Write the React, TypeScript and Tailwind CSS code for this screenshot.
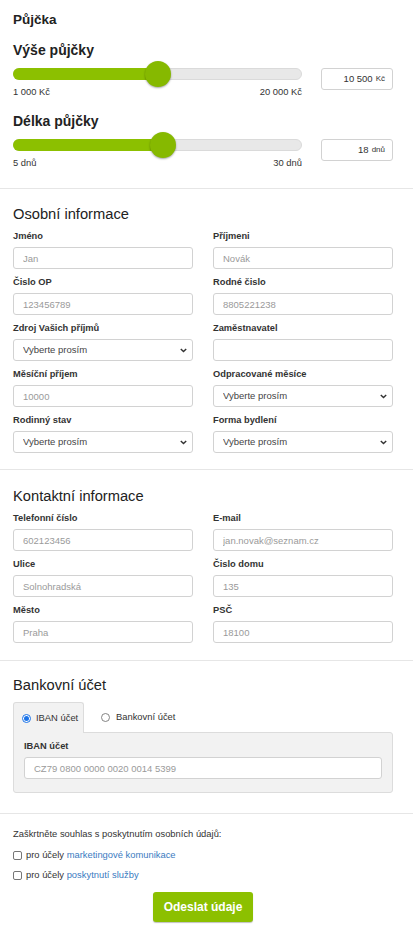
import React from "react";

function Label({ children }: { children: React.ReactNode }) {
  return (
    <div className="h-[15px] text-[9.3px] font-bold leading-[15px] text-[#333] mb-[3px] whitespace-nowrap">
      {children}
    </div>
  );
}

function TextField({ label, placeholder }: { label: string; placeholder?: string }) {
  return (
    <div className="flex flex-col">
      <Label>{label}</Label>
      <input
        className="block h-[22px] w-full rounded-[3px] border border-[#d2d2d2] bg-white px-[9px] text-[9.5px] text-[#555] outline-none placeholder:text-[#9a9a9a]"
        placeholder={placeholder}
      />
    </div>
  );
}

function SelectField({ label }: { label: string }) {
  return (
    <div className="flex flex-col">
      <Label>{label}</Label>
      <div className="relative h-[22px]">
        <select className="block h-[22px] w-full appearance-none rounded-[3px] border border-[#d2d2d2] bg-white pl-[9px] text-[9.5px] text-[#444] outline-none">
          <option>Vyberte prosím</option>
        </select>
        <svg
          className="pointer-events-none absolute right-[6px] top-[9px]"
          width="7"
          height="5"
          viewBox="0 0 7 5"
        >
          <path d="M0.8 0.9 L3.5 3.6 L6.2 0.9" fill="none" stroke="#333" strokeWidth="1.4" />
        </svg>
      </div>
    </div>
  );
}

function Slider({ pct, min, max, value, unit }: { pct: number; min: string; max: string; value: string; unit: string }) {
  return (
    <div className="mt-[5px] flex items-start">
      <div className="w-[289px]">
        <div className="relative h-[20px]">
          <div className="absolute left-0 right-0 top-[4px] h-[12px] rounded-full border border-[#dadada] bg-[#e8e8e8]" />
          <div
            className="absolute left-0 top-[4px] h-[12px] rounded-full bg-[#8cc000]"
            style={{ width: `${pct}%` }}
          />
          <div
            className="absolute top-[-3px] h-[26px] w-[26px] -translate-x-1/2 rounded-full bg-[#86b900] shadow-[0_1px_2px_rgba(0,0,0,0.35)]"
            style={{ left: `${pct}%` }}
          />
        </div>
        <div className="flex h-[16px] items-center justify-between text-[9.4px] text-[#333]">
          <span>{min}</span>
          <span>{max}</span>
        </div>
      </div>
      <div className="ml-[19px] mt-[4px] flex h-[22px] w-[72px] items-center justify-end rounded-[3px] border border-[#d2d2d2] bg-white pr-[7px] text-[9.5px] text-[#333]">
        {value}
        <span className="ml-[3px] text-[8px]">{unit}</span>
      </div>
    </div>
  );
}

function Radio({ checked }: { checked?: boolean }) {
  return checked ? (
    <svg width="9" height="9" viewBox="0 0 9 9" className="block">
      <circle cx="4.5" cy="4.5" r="4" fill="#fff" stroke="#1a73e8" strokeWidth="1" />
      <circle cx="4.5" cy="4.5" r="2.5" fill="#1a73e8" />
    </svg>
  ) : (
    <svg width="9" height="9" viewBox="0 0 9 9" className="block">
      <circle cx="4.5" cy="4.5" r="4" fill="#fff" stroke="#767676" strokeWidth="0.9" />
    </svg>
  );
}

function Checkbox() {
  return <span className="block h-[9px] w-[9px] rounded-[2px] border border-[#767676] bg-white" />;
}

export default function App() {
  return (
    <div className="w-[413px] bg-white [font-family:'Liberation_Sans',Arial,sans-serif] text-[#333]">
      {/* Půjčka */}
      <section className="pl-[13px] pr-[20px] pt-[12px] pb-[17px]">
        <h2 className="h-[16px] text-[13.5px] font-bold leading-[16px] text-[#222]">Půjčka</h2>
        <h3 className="mt-[13px] h-[18px] text-[14px] font-bold leading-[18px] text-[#222]">Výše půjčky</h3>
        <Slider pct={50} min="1 000 Kč" max="20 000 Kč" value="10 500" unit="Kč" />
        <h3 className="mt-[12px] h-[18px] text-[14px] font-bold leading-[18px] text-[#222]">Délka půjčky</h3>
        <Slider pct={52} min="5 dnů" max="30 dnů" value="18" unit="dnů" />
      </section>

      {/* Osobní informace */}
      <section className="border-t border-[#e6e6e6] pl-[13px] pr-[20px] pt-[15px] pb-[16px]">
        <h2 className="mb-[5px] h-[20px] text-[14.7px] leading-[20px] text-[#222]">Osobní informace</h2>
        <div className="grid grid-cols-2 gap-x-[20px] gap-y-[6px]">
          <TextField label="Jméno" placeholder="Jan" />
          <TextField label="Příjmeni" placeholder="Novák" />
          <TextField label="Čislo OP" placeholder="123456789" />
          <TextField label="Rodné čislo" placeholder="8805221238" />
          <SelectField label="Zdroj Vašich příjmů" />
          <TextField label="Zaměstnavatel" />
          <TextField label="Měsíční příjem" placeholder="10000" />
          <SelectField label="Odpracované měsíce" />
          <SelectField label="Rodinný stav" />
          <SelectField label="Forma bydlení" />
        </div>
      </section>

      {/* Kontaktní informace */}
      <section className="border-t border-[#e6e6e6] pl-[13px] pr-[20px] pt-[16px] pb-[17px]">
        <h2 className="mb-[5px] h-[20px] text-[14.7px] leading-[20px] text-[#222]">Kontaktní informace</h2>
        <div className="grid grid-cols-2 gap-x-[20px] gap-y-[6px]">
          <TextField label="Telefonní číslo" placeholder="602123456" />
          <TextField label="E-mail" placeholder="jan.novak@seznam.cz" />
          <TextField label="Ulice" placeholder="Solnohradská" />
          <TextField label="Čislo domu" placeholder="135" />
          <TextField label="Město" placeholder="Praha" />
          <TextField label="PSČ" placeholder="18100" />
        </div>
      </section>

      {/* Bankovní účet */}
      <section className="border-t border-[#e6e6e6] pl-[13px] pr-[20px] pt-[14px] pb-[20px]">
        <h2 className="h-[20px] text-[14.7px] leading-[20px] text-[#222]">Bankovní účet</h2>
        <div className="mt-[7px] flex items-end">
          <div className="relative z-10 -mb-px flex h-[31px] w-[71px] items-center gap-[5px] rounded-t-[3px] border border-b-0 border-[#dcdcdc] bg-[#f2f2f2] pl-[8px] text-[9.4px] text-[#333]">
            <Radio checked />
            <span>IBAN účet</span>
          </div>
          <div className="flex h-[30px] items-center gap-[6px] pl-[17px] text-[9.4px] text-[#333]">
            <Radio />
            <span>Bankovní účet</span>
          </div>
        </div>
        <div className="rounded-b-[3px] rounded-tr-[3px] border border-[#dcdcdc] bg-[#f2f2f2] px-[10px] pt-[6px] pb-[13px]">
          <Label>IBAN účet</Label>
          <input
            className="mt-[1px] block h-[22px] w-full rounded-[3px] border border-[#d2d2d2] bg-white px-[9px] text-[9.5px] outline-none placeholder:text-[#9a9a9a]"
            placeholder="CZ79 0800 0000 0020 0014 5399"
          />
        </div>
      </section>

      {/* Souhlas */}
      <section className="border-t border-[#e6e6e6] pl-[13px] pr-[20px] pt-[13px] pb-[13px]">
        <p className="h-[14px] text-[9.4px] leading-[14px] text-[#333]">
          Zaškrtněte souhlas s poskytnutím osobních údajů:
        </p>
        <div className="mt-[4px] flex h-[20px] items-center gap-[4px] text-[9.4px] text-[#333]">
          <Checkbox />
          <span>
            pro účely <span className="text-[#3b7bbf]">marketingové komunikace</span>
          </span>
        </div>
        <div className="flex h-[20px] items-center gap-[4px] text-[9.4px] text-[#333]">
          <Checkbox />
          <span>
            pro účely <span className="text-[#3b7bbf]">poskytnutí služby</span>
          </span>
        </div>
        <div className="mt-[7px] flex justify-center">
          <button className="h-[30px] w-[100px] rounded-[3px] bg-[#8cc000] text-[12px] font-bold text-white shadow-[0_1px_1px_rgba(0,0,0,0.25)]">
            Odeslat údaje
          </button>
        </div>
      </section>
    </div>
  );
}
